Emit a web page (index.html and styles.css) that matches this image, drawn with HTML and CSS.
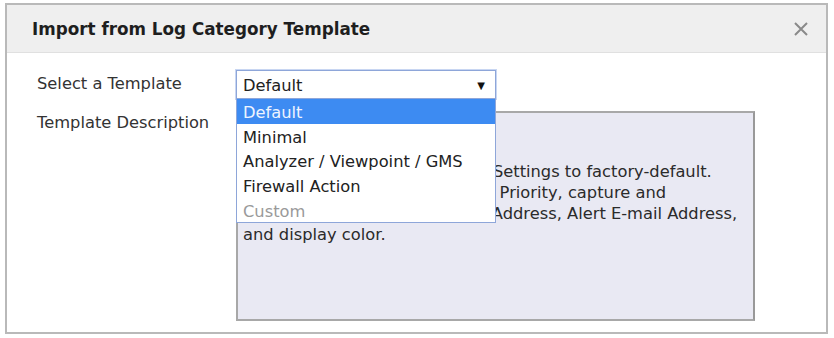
FILE: index.html
```html
<!DOCTYPE html>
<html>
<head>
<meta charset="utf-8">
<link rel="stylesheet" href="styles.css">
</head>
<body>
<div class="dialog">
  <div class="header">
    <span class="title">Import from Log Category Template</span>
    <span class="close">
      <svg width="16" height="16" viewBox="0 0 16 16"><path d="M2 2 L14 14 M14 2 L2 14" stroke="#8a8a8a" stroke-width="2" fill="none"/></svg>
    </span>
  </div>
  <div class="content">
    <div class="label">Select a Template</div>
    <div class="field select-wrap">
      <div class="select">
        <span>Default</span>
        <span class="arrow">▼</span>
      </div>
      <ul class="options">
        <li class="selected">Default</li>
        <li>Minimal</li>
        <li>Analyzer / Viewpoint / GMS</li>
        <li>Firewall Action</li>
        <li class="disabled">Custom</li>
      </ul>
    </div>
    <div class="label">Template Description</div>
    <div class="field">
      <div class="desc">Default<br><br>Resets all of the Log Category Settings to factory-default.<br>This includes the Event Levels, Priority, capture and<br>the e-mail to a Primary E-mail Address, Alert E-mail Address,<br>and display color.</div>
    </div>
  </div>
</div>
</body>
</html>
```

FILE: styles.css
```css
html, body {
  margin: 0;
  padding: 0;
  background: #ffffff;
}

body {
  font-family: "DejaVu Sans", Verdana, sans-serif;
  color: #2b2b2b;
}

.dialog {
  margin: 3px 0 0 5px;
  width: 819px;
  height: 327px;
  border: 2px solid #b9b9b9;
  background: #ffffff;
}

.header {
  height: 46px;
  background: #efefef;
  border-bottom: 1px solid #e0e0e0;
  display: flex;
  align-items: center;
  justify-content: space-between;
  padding: 1px 17px 0 25px;
}

.title {
  font-weight: bold;
  font-size: 16.8px;
  color: #1e1e1e;
}

.close {
  display: flex;
  align-items: center;
}

.content {
  display: grid;
  grid-template-columns: 199px 1fr;
  row-gap: 12px;
  padding: 17px 0 0 30px;
  font-size: 16.3px;
}

.label {
  line-height: 28px;
  color: #333;
}

.label + .field + .label {
  line-height: 24px;
}

.select-wrap {
  position: relative;
  width: 260px;
}

.select {
  box-sizing: border-box;
  height: 29px;
  border: 1px solid #8ea6d9;
  box-shadow: 0 0 0 1px #c8d6f2;
  display: flex;
  align-items: center;
  justify-content: space-between;
  padding: 2px 10px 0 6px;
  color: #222;
}

.arrow {
  font-size: 10px;
  color: #111;
}

.options {
  position: absolute;
  top: 29px;
  left: 0;
  width: 260px;
  box-sizing: border-box;
  margin: 0;
  padding: 0;
  list-style: none;
  background: #fff;
  border: 1px solid #8ea6d9;
  border-top: none;
  z-index: 2;
}

.options li {
  height: 24.7px;
  line-height: 28px;
  padding-left: 6px;
  color: #222;
  white-space: nowrap;
}

.options li.selected {
  background: #3d8bf2;
  color: #eef4ff;
}

.options li.disabled {
  color: #9a9a9a;
}

.desc {
  box-sizing: border-box;
  width: 519px;
  height: 210px;
  background: #e9e9f3;
  border: 2px solid #a8a8a8;
  border-right-color: #999;
  padding: 6px 5px;
  line-height: 21px;
  color: #2b2b2b;
  white-space: nowrap;
  overflow: hidden;
}
```
